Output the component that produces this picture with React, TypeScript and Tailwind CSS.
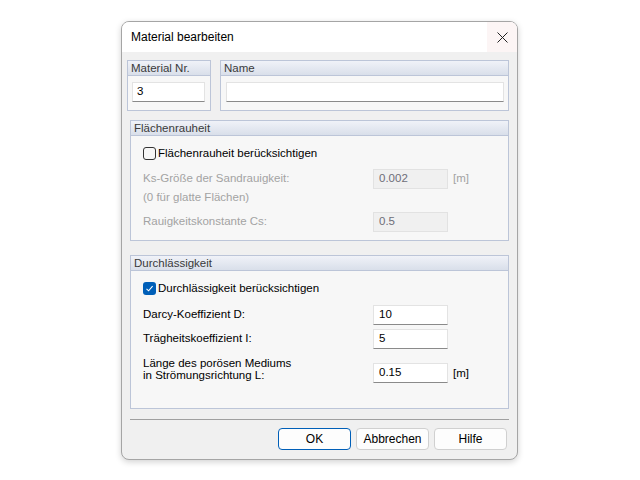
const font = { fontFamily: '"Liberation Sans", Arial, sans-serif' };

function GroupHeader({ title }: { title: string }) {
  return (
    <div className="h-[15px] border-b border-[#bcc5d8] bg-gradient-to-b from-[#f0f2f8] to-[#d9dfea] pl-[3px] text-[11.5px] leading-[14px] text-[#3a3a3a]">
      {title}
    </div>
  );
}

function Field({
  value,
  disabled,
}: {
  value: string;
  disabled?: boolean;
}) {
  return (
    <div
      className={
        disabled
          ? "flex h-[20px] w-[75px] items-center border border-[#e2e2e2] bg-[#f0f0f0] pl-[5px] text-[11.5px] text-[#6e6e78]"
          : "flex h-[20px] w-[75px] items-center border border-[#e3e3e3] border-b-[#8a8a8a] bg-white pl-[5px] text-[11.5px] text-black"
      }
    >
      {value}
    </div>
  );
}

function Checkbox({ checked, label }: { checked: boolean; label: string }) {
  return (
    <div className="flex h-[13px] items-center">
      {checked ? (
        <div className="flex h-[13px] w-[13px] items-center justify-center rounded-[3px] bg-[#005fb8]">
          <svg width="9" height="9" viewBox="0 0 9 9">
            <path d="M1.5 4.8 L3.6 6.8 L7.6 2.2" stroke="white" strokeWidth="1.1" fill="none" />
          </svg>
        </div>
      ) : (
        <div className="h-[13px] w-[13px] rounded-[3px] border border-[#333] bg-[#f7f7f7]" />
      )}
      <span className="ml-[2px] text-[11.5px] text-black">{label}</span>
    </div>
  );
}

export default function App() {
  return (
    <div className="min-h-screen bg-white pl-[121px] pt-[21px]" style={font}>
      <div className="flex h-[439px] w-[397px] flex-col overflow-hidden rounded-[8px] border border-[#a5a5a5] bg-[#f0f0f0] shadow-[0_2px_6px_rgba(0,0,0,0.18)]">
        {/* title bar */}
        <div className="flex h-[30px] items-center bg-white">
          <span className="flex-1 pl-[9px] text-[12px] text-black">Material bearbeiten</span>
          <div className="flex h-[30px] w-[30px] items-center justify-center bg-[#fcf5f5]">
            <svg width="11" height="11" viewBox="0 0 11 11">
              <path d="M0.5 0.5 L10.5 10.5 M10.5 0.5 L0.5 10.5" stroke="#222" strokeWidth="1" />
            </svg>
          </div>
        </div>

        <div className="flex flex-1 flex-col pl-[5px] pr-[8px] pt-[8px]">
          {/* row 1 */}
          <div className="flex h-[51px] gap-[9px]">
            <div className="flex w-[84px] flex-col border border-[#bcc5d8] bg-[#f7f7f7]">
              <GroupHeader title="Material Nr." />
              <div className="ml-[4px] mt-[6px] flex h-[20px] w-[73px] items-center border border-[#e3e3e3] border-b-[#8a8a8a] bg-white pl-[4px] text-[11.5px]">
                3
              </div>
            </div>
            <div className="flex flex-1 flex-col border border-[#bcc5d8] bg-[#f7f7f7]">
              <GroupHeader title="Name" />
              <div className="ml-[5px] mr-[4px] mt-[6px] h-[20px] border border-[#e3e3e3] border-b-[#8a8a8a] bg-white" />
            </div>
          </div>

          {/* Flächenrauheit */}
          <div className="ml-[3px] mt-[9px] flex h-[121px] flex-col border border-[#bcc5d8] bg-[#f7f7f7]">
            <GroupHeader title="Flächenrauheit" />
            <div className="flex flex-col pl-[12px] pt-[11px]">
              <Checkbox checked={false} label="Flächenrauheit berücksichtigen" />
              <div className="mt-[9px] flex items-center">
                <span className="w-[230px] text-[11.5px] text-[#a3a3a3]">Ks-Größe der Sandrauigkeit:</span>
                <Field value="0.002" disabled />
                <span className="ml-[5px] text-[11.5px] text-[#a3a3a3]">[m]</span>
              </div>
              <div className="mt-[1px] h-[14px] text-[11.5px] leading-[14px] text-[#a3a3a3]">(0 für glatte Flächen)</div>
              <div className="mt-[8px] flex items-center">
                <span className="w-[230px] text-[11.5px] text-[#a3a3a3]">Rauigkeitskonstante Cs:</span>
                <Field value="0.5" disabled />
              </div>
            </div>
          </div>

          {/* Durchlässigkeit */}
          <div className="ml-[3px] mt-[14px] flex h-[154px] flex-col border border-[#bcc5d8] bg-[#f7f7f7]">
            <GroupHeader title="Durchlässigkeit" />
            <div className="flex flex-col pl-[12px] pt-[11px]">
              <Checkbox checked label="Durchlässigkeit berücksichtigen" />
              <div className="mt-[10px] flex items-center">
                <span className="w-[230px] text-[11.5px] text-black">Darcy-Koeffizient D:</span>
                <Field value="10" />
              </div>
              <div className="mt-[4px] flex items-center">
                <span className="w-[230px] text-[11.5px] text-black">Trägheitskoeffizient I:</span>
                <Field value="5" />
              </div>
              <div className="mt-[8px] flex items-end">
                <div className="flex w-[230px] flex-col pb-[2px] text-[11.5px] leading-[12px] text-black">
                  <span>Länge des porösen Mediums</span>
                  <span>in Strömungsrichtung L:</span>
                </div>
                <Field value="0.15" />
                <span className="mb-[3px] ml-[5px] text-[11.5px] leading-[13px] text-black">[m]</span>
              </div>
            </div>
          </div>

          {/* separator */}
          <div className="ml-[3px] mt-[10px] h-[1px] bg-[#a0a0a0]" />

          {/* buttons */}
          <div className="mt-[8px] flex justify-end gap-[5px] pr-[2px]">
            <button className="h-[22px] w-[73px] rounded-[4px] border border-[#005fb8] bg-[#fdfdfd] text-[12px] text-black">
              OK
            </button>
            <button className="h-[22px] w-[73px] rounded-[4px] border border-[#d0d0d0] bg-[#fdfdfd] text-[12px] text-black">
              Abbrechen
            </button>
            <button className="h-[22px] w-[73px] rounded-[4px] border border-[#d0d0d0] bg-[#fdfdfd] text-[12px] text-black">
              Hilfe
            </button>
          </div>
        </div>
      </div>
    </div>
  );
}
